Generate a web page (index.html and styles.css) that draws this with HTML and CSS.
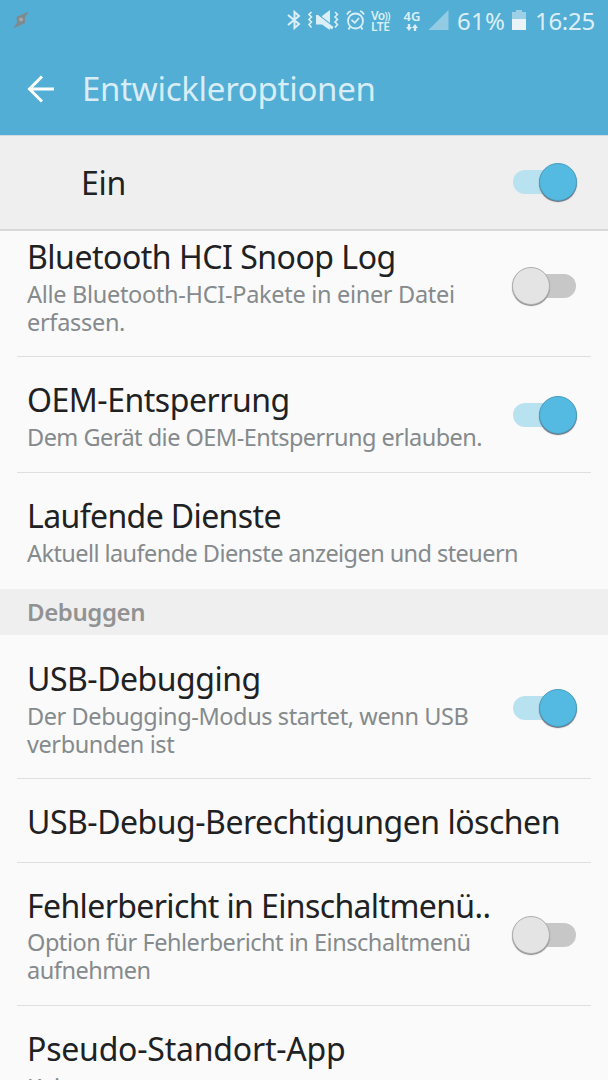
FILE: index.html
```html
<!DOCTYPE html>
<html lang="de">
<head>
    <meta charset="UTF-8">
    <meta name="viewport" content="width=device-width, initial-scale=1.0">
    <title>Entwickleroptionen</title>
    <link rel="stylesheet" href="styles.css">
</head>
<body>
    <div class="topo">
        <div class="status">
            <svg class="raio" width="16" height="18" viewBox="0 0 16 18">
                <path d="M15.5 0.5L3.5 6L4 11.5L0.3 17.5L12 12V6.5Z" fill="#80898e"/>
                <circle cx="8" cy="8.5" r="2" fill="#a3a9ad"/>
            </svg>
            <div class="icones">
                <svg width="14" height="20" viewBox="0 0 14 20" fill="none" stroke="currentColor" stroke-width="2">
                    <path d="M1 5L12 14L7.5 18V2L12 6L1 15"/>
                </svg>
                <svg class="mudo" width="31" height="20" viewBox="0 0 31 20">
                    <path d="M3.5 2L1 4.5L3.5 7L1 9.5L3.5 12L1 14.5L3.5 17.5M27 2L29.5 4.5L27 7L29.5 9.5L27 12L29.5 14.5L27 17.5" fill="none" stroke="currentColor" stroke-width="1.6"/>
                    <path d="M14 6L22 0V13L14.2 7ZM8 5H10L25.5 17L24 19.5L21.8 18V20L14 14.5H8Z" fill="currentColor"/>
                </svg>
                <svg class="alarme" width="19" height="20" viewBox="0 0 19 20" fill="none" stroke="currentColor" stroke-width="1.8">
                    <circle cx="9.5" cy="11" r="7.5"/>
                    <path d="M1 4.5C2 2.5 3 1.5 5 1M14 1C16 1.5 17 2.5 18 4.5M5.5 9.8L8.8 12.8L13 8M4 17L2.5 19.5M15 17L16.5 19.5"/>
                </svg>
                <div class="volte">
                    <div class="vo">Vo<span class="ondas">))</span></div>
                    <div>LTE</div>
                </div>
                <div class="rede">
                    <span>4G</span>
                    <svg width="12" height="7" viewBox="0 0 12 7" fill="currentColor">
                        <path d="M1.8 0H4.2V3H6L3 7L0 3H1.8ZM7.8 7H10.2V4H12L9 0L6 4H7.8Z"/>
                    </svg>
                </div>
                <svg class="sinal" width="21" height="20" viewBox="0 0 21 20"><path d="M20.5 0V20H0.5Z" fill="#92cbe3"/></svg>
                <span class="carga">61%</span>
                <svg width="14" height="20" viewBox="0 0 14 20">
                    <path d="M4 0H10V2H14V9H0V2H4Z" fill="#9dd0e6"/>
                    <path d="M0 9H14V20H0Z" fill="#e9f3f8"/>
                </svg>
                <span class="hora">16:25</span>
            </div>
        </div>
        <div class="barra">
            <svg width="28" height="28" viewBox="0 0 28 28" fill="none" stroke="#fff" stroke-width="3">
                <path d="M15 1.5L2.5 14L15 26.5M2.5 14H27"/>
            </svg>
            <h1 class="pagina">Entwickleroptionen</h1>
        </div>
    </div>
    <div class="mestre">
        <span class="ein">Ein</span>
        <div class="chave on"><div class="bola"></div></div>
    </div>
    <div class="lista">
        <div class="linha primeira">
            <div class="texto">
                <div class="titulo">Bluetooth HCI Snoop Log</div>
                <div class="sub s1">Alle Bluetooth-HCI-Pakete in einer Datei<br>erfassen.</div>
            </div>
            <div class="chave"><div class="bola"></div></div>
        </div>
        <div class="linha">
            <div class="texto">
                <div class="titulo">OEM-Entsperrung</div>
                <div class="sub s2">Dem Gerät die OEM-Entsperrung erlauben.</div>
            </div>
            <div class="chave on"><div class="bola"></div></div>
        </div>
        <div class="linha ultima">
            <div class="texto">
                <div class="titulo t3">Laufende Dienste</div>
                <div class="sub s3">Aktuell laufende Dienste anzeigen und steuern</div>
            </div>
        </div>
        <div class="secao">Debuggen</div>
        <div class="linha usb">
            <div class="texto">
                <div class="titulo">USB-Debugging</div>
                <div class="sub">Der Debugging-Modus startet, wenn USB<br>verbunden ist</div>
            </div>
            <div class="chave on"><div class="bola"></div></div>
        </div>
        <div class="linha simples">
            <div class="texto">
                <div class="titulo">USB-Debug-Berechtigungen löschen</div>
            </div>
        </div>
        <div class="linha relatorio">
            <div class="texto">
                <div class="titulo t6">Fehlerbericht in Einschaltmenü..</div>
                <div class="sub s6">Option für Fehlerbericht in Einschaltmenü<br>aufnehmen</div>
            </div>
            <div class="chave"><div class="bola"></div></div>
        </div>
        <div class="linha ultima">
            <div class="texto">
                <div class="titulo t7">Pseudo-Standort-App</div>
                <div class="sub s7">Keine</div>
            </div>
        </div>
    </div>
</body>
</html>
```
FILE: styles.css
```css
@charset "UTF-8";
*{
    padding: 0px;
    margin: 0px;
    box-sizing: border-box;
}
body{
    display: flex;
    flex-direction: column;
    height: 1080px;
    overflow: hidden;
    background-color: #fafafa;
    color: #202122;
    font-family: "Noto Sans", sans-serif;
}
svg{
    display: block;
    flex: none;
}
.topo{
    flex: none;
    height: 135px;
    background-color: #52aed5;
}
.status{
    display: flex;
    justify-content: space-between;
    height: 42px;
    padding: 10px 12px 0px 13px;
    color: #dceff7;
}
.raio{
    margin-top: 1px;
}
.icones{
    display: flex;
    height: 20px;
}
.icones > *{
    flex: none;
}
.mudo, .alarme, .sinal{
    margin-left: 7px;
}
.volte, .rede{
    display: flex;
    flex-direction: column;
    font-weight: 600;
    line-height: 12px;
    white-space: nowrap;
}
.volte{
    width: 22px;
    margin-left: 6px;
    font-size: 12px;
    letter-spacing: -0.5px;
}
.vo{
    line-height: 11px;
    letter-spacing: -0.6px;
}
.ondas{
    font-size: 10px;
    line-height: 10px;
    letter-spacing: -0.5px;
}
.rede{
    align-items: center;
    width: 18px;
    margin-left: 10px;
    gap: 2px;
    font-size: 13px;
}
.carga, .hora{
    font-size: 24px;
    line-height: 22px;
    white-space: nowrap;
}
.carga{
    width: 51px;
    margin-left: 8px;
    margin-right: 4px;
    letter-spacing: 0.3px;
}
.hora{
    width: 61px;
    margin-left: 9px;
    letter-spacing: -0.3px;
}
.barra{
    display: flex;
    align-items: center;
    height: 93px;
    padding: 0px 27px;
    gap: 27px;
}
.pagina{
    font-size: 33px;
    font-weight: 400;
    letter-spacing: -0.28px;
    color: #d8edf6;
}
.mestre{
    display: flex;
    flex: none;
    align-items: center;
    justify-content: space-between;
    height: 96px;
    padding: 0px 31px 1px 81px;
    border-top: 1px solid #d3dadd;
    border-bottom: 2px solid #d8d8d8;
    background-color: #efefef;
}
.ein{
    padding-top: 1px;
    font-size: 32px;
    letter-spacing: -0.3px;
}
.lista{
    flex: 1;
    min-height: 0px;
    overflow: hidden;
}
.linha{
    display: flex;
    align-items: center;
    justify-content: space-between;
    margin: 0px 17px;
    padding: 22px 14px 21px 10px;
    border-bottom: 1px solid #dfdfdf;
}
.primeira{
    padding-top: 5px;
    padding-bottom: 20px;
}
.usb{
    padding-top: 23px;
    padding-bottom: 20px;
}
.simples{
    padding-bottom: 19px;
}
.ultima{
    border-bottom-color: transparent;
}
.titulo{
    font-size: 32px;
    line-height: 42px;
    letter-spacing: -0.48px;
    white-space: nowrap;
}
.t3, .t6{
    letter-spacing: -0.62px;
}
.t7{
    letter-spacing: -0.22px;
}
.sub{
    margin-top: 2px;
    font-size: 23.5px;
    line-height: 28px;
    letter-spacing: -0.41px;
    color: #858a8d;
    white-space: nowrap;
}
.s1{
    letter-spacing: -0.3px;
}
.s2{
    letter-spacing: -0.52px;
}
.s3{
    letter-spacing: -0.57px;
}
.s6{
    margin-top: 1px;
    letter-spacing: -0.47px;
}
.s7{
    margin-top: 3px;
}
.secao{
    height: 46px;
    padding-left: 27px;
    background-color: #efefef;
    color: #929292;
    font-size: 24px;
    font-weight: 600;
    line-height: 46px;
    letter-spacing: -0.4px;
}
.chave{
    display: flex;
    flex: none;
    align-items: center;
    position: relative;
    width: 65px;
    height: 40px;
}
/* trilho atras da bola */
.chave::before{
    content: "";
    position: absolute;
    left: 3px;
    top: 8px;
    width: 61px;
    height: 24px;
    border-radius: 12px;
    background-color: #c7c7c7;
}
.bola{
    position: relative;
    width: 38px;
    height: 38px;
    border: 1px solid #b0b0b0;
    border-radius: 50%;
    background-color: #e4e4e4;
    box-shadow: 0px 1px 1px #888;
}
.on{
    justify-content: flex-end;
}
.on::before{
    left: 1px;
    background-color: #b9e2f0;
}
.on .bola{
    border-color: #4a9fc0;
    background-color: #54bae1;
    box-shadow: 0px 1px 1px #667;
}
```
